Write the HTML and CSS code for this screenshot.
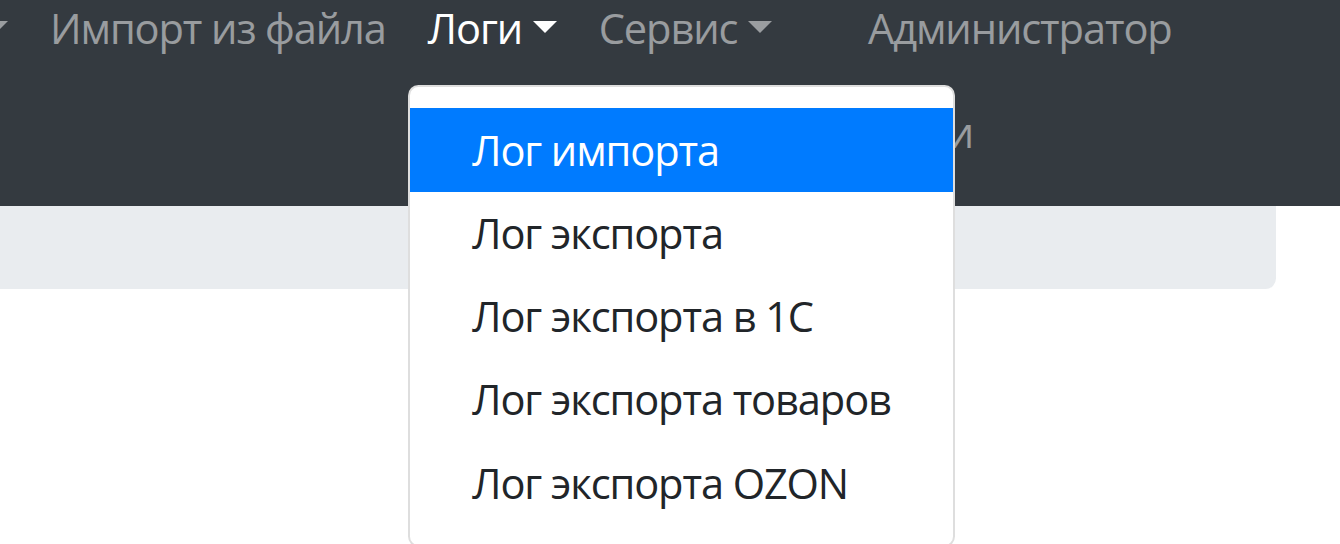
FILE: index.html
```html
<!DOCTYPE html>
<html lang="ru">
<head>
<meta charset="utf-8">
<title>Логи</title>
<link rel="stylesheet" href="styles.css">
</head>
<body>
<nav class="navbar">
  <ul class="nav-row">
    <li class="nav-item first"><a class="nav-link dropdown-toggle" href="#">Справочники</a></li>
    <li class="nav-item"><a class="nav-link" href="#">Импорт из файла</a></li>
    <li class="nav-item dropdown">
      <a class="nav-link dropdown-toggle active" href="#">Логи</a>
      <div class="dropdown-menu">
        <a class="dropdown-item active" href="#">Лог импорта</a>
        <a class="dropdown-item" href="#">Лог экспорта</a>
        <a class="dropdown-item" href="#">Лог экспорта в 1С</a>
        <a class="dropdown-item" href="#">Лог экспорта товаров</a>
        <a class="dropdown-item" href="#">Лог экспорта OZON</a>
      </div>
    </li>
    <li class="nav-item"><a class="nav-link dropdown-toggle" href="#">Сервис</a></li>
    <li class="nav-item admin"><a class="nav-link" href="#">Администратор</a></li>
  </ul>
  <ul class="nav-row second">
    <li class="nav-item"><a class="nav-link" href="#">Выйти</a></li>
  </ul>
</nav>
<div class="content">
  <div class="breadcrumb"></div>
</div>
</body>
</html>
```
FILE: styles.css
```css
html, body {
  margin: 0;
  padding: 0;
  overflow: hidden;
  height: 544px;
  background: #fff;
}
body {
  font-family: "Open Sans", "Noto Sans", "Liberation Sans", sans-serif;
  font-size: 41.6px;
  line-height: 62.4px;
  letter-spacing: -1.1px;
  color: #212529;
}
a { text-decoration: none; }
.navbar {
  background: #343a40;
  margin-top: -45px;
  padding: 21px 0;
}
.nav-row {
  list-style: none;
  margin: 0;
  padding: 0;
  display: flex;
  align-items: center;
}
.nav-item { position: relative; }
.nav-item.first {
  width: 29px;
  display: flex;
  justify-content: flex-end;
}
.nav-item.admin { margin-left: 54px; }
.nav-link {
  display: block;
  padding: 21px 21px;
  color: rgba(255, 255, 255, 0.5);
  white-space: nowrap;
}
.nav-link.active { color: #fff; }
.dropdown-toggle::after {
  content: "";
  display: inline-block;
  margin-left: 10.6px;
  vertical-align: 10.6px;
  border-top: 12.5px solid;
  border-left: 12.5px solid transparent;
  border-right: 12.5px solid transparent;
  border-bottom: 0;
}
.nav-row.second {
  width: 994px;
  justify-content: flex-end;
}
.dropdown-menu {
  position: absolute;
  top: 100%;
  left: 1px;
  margin-top: 5px;
  padding: 21px 0;
  background: #fff;
  border: 2px solid rgba(0, 0, 0, 0.13);
  border-radius: 10.4px;
  z-index: 10;
  min-width: 416px;
}
.dropdown-item {
  display: block;
  padding: 10.4px 62.4px;
  color: #212529;
  white-space: nowrap;
}
.dropdown-item.active {
  background: #007bff;
  color: #fff;
}
.content {
  padding-right: 64px;
}
.breadcrumb {
  background: #e9ecef;
  height: 83px;
  margin-left: -20px;
  border-radius: 0 0 10.4px 10.4px;
}
```
